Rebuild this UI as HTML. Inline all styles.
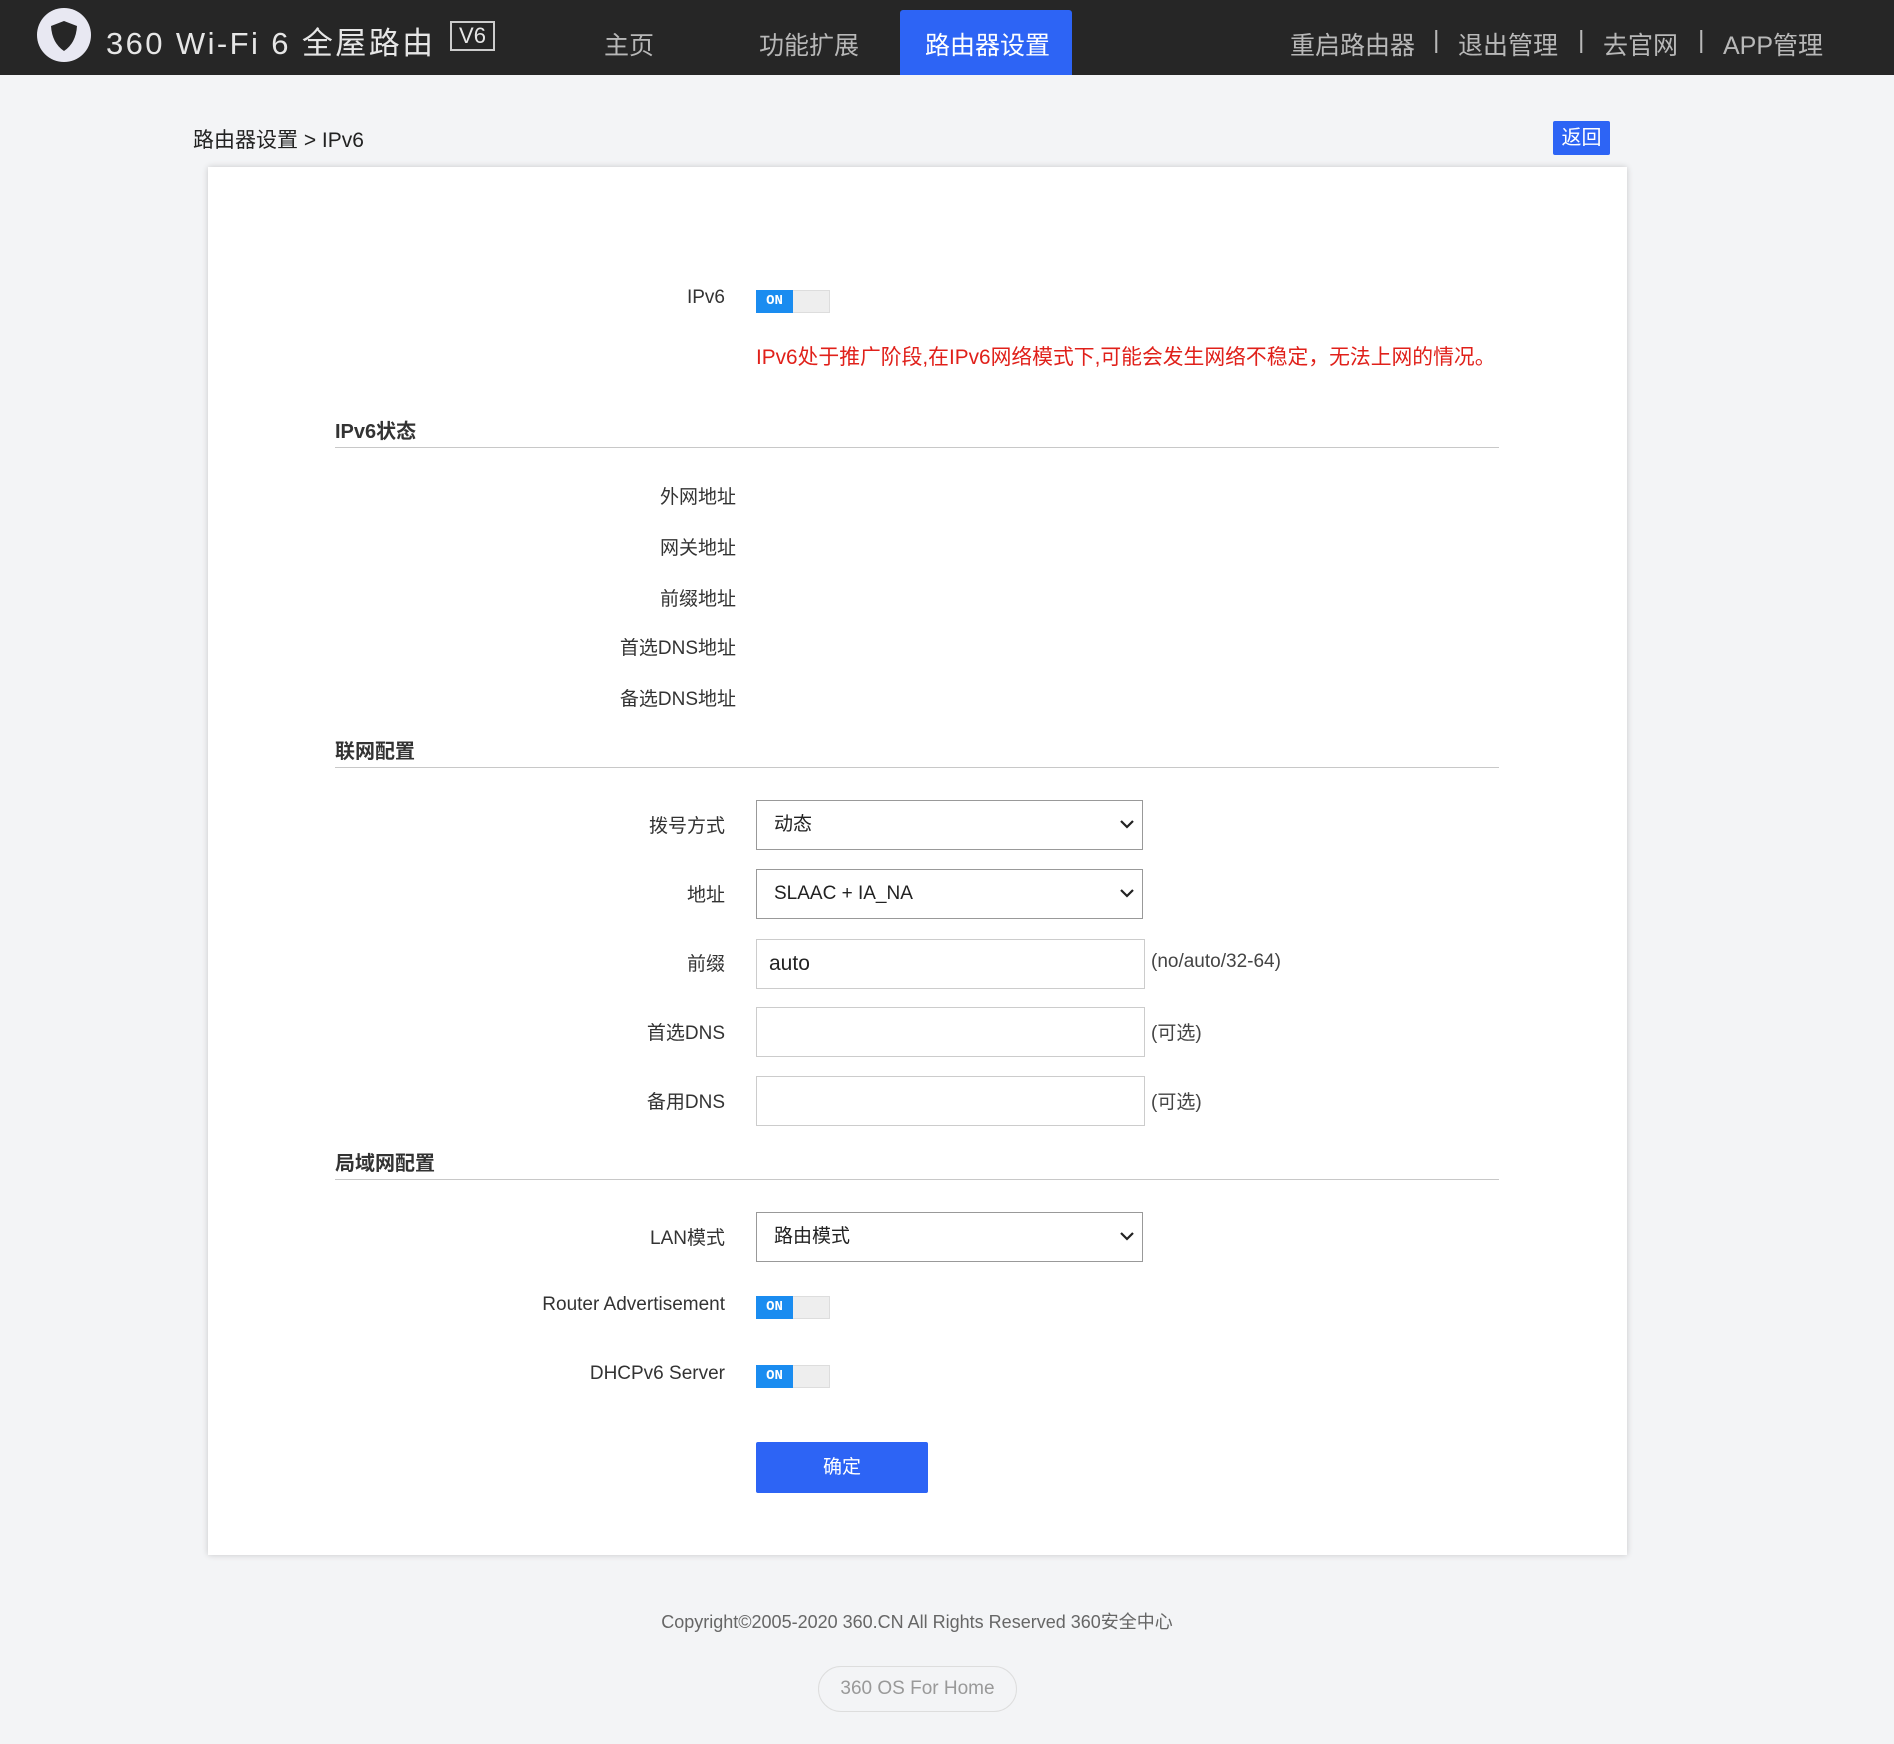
<!DOCTYPE html>
<html><head><meta charset="utf-8"><style>
*{margin:0;padding:0;box-sizing:border-box}
body{width:1894px;height:1744px;background:#f3f4f6;font-family:"Liberation Sans","Noto Sans CJK SC",sans-serif;position:relative;overflow:hidden;color:#333}
.a{position:absolute;white-space:nowrap}
.hdr{position:absolute;left:0;top:0;width:1894px;height:75px;background:#262626}
.nav{color:#b8b8b8;font-size:25px;top:26px}
.card{position:absolute;left:208px;top:167px;width:1419px;height:1388px;background:#fff;box-shadow:0 0 6px rgba(0,0,0,.18)}
.lbl{font-size:19px;color:#333;text-align:right}
.sec{font-size:20px;font-weight:bold;color:#333}
.line{position:absolute;left:335px;width:1164px;height:1px;background:#c8c8c8}
.tg{position:absolute;width:74px;height:23px;border:1px solid #ddd;background:#eee}
.tg b{position:absolute;left:-1px;top:-1px;width:37px;height:23px;background:#1a8cf0;color:#fff;font:bold 14px "Liberation Mono",monospace;text-align:center;line-height:23px}
.sel,.inp{position:absolute;left:756px;width:387px;height:50px;border:1px solid #999;background:#fff;font-size:19px;padding-left:17px;line-height:48px;color:#222}
.inp{border-color:#ccc;width:389px}
.sel svg{position:absolute;right:8px;top:18px}
.hint{font-size:19px;color:#444}
</style></head><body>
<div class="hdr"></div>
<svg class="a" style="left:36px;top:7px" width="56" height="56" viewBox="0 0 56 56"><circle cx="28" cy="28" r="27" fill="#e8e8f2"/><path d="M28 14 L41 19 Q40 36 28 44 Q16 36 15 19 Z" fill="#262626"/></svg>
<div class="a" style="left:106px;top:18px;color:#e6e6e6;font-size:31px;letter-spacing:2.4px">360 Wi-Fi 6 全屋路由</div>
<div class="a" style="left:450px;top:21px;width:45px;height:30px;border:2px solid #ccc;color:#e6e6e6;font-size:22px;text-align:center;line-height:26px">V6</div>
<div class="a nav" style="left:604px">主页</div>
<div class="a nav" style="left:759px">功能扩展</div>
<div class="a" style="left:900px;top:10px;width:172px;height:65px;background:#2d64f5;border-radius:3px 3px 0 0"></div>
<div class="a nav" style="left:925px;color:#fff">路由器设置</div>
<div class="a nav" style="left:1290px">重启路由器</div>
<div class="a nav" style="left:1433px">|</div>
<div class="a nav" style="left:1458px">退出管理</div>
<div class="a nav" style="left:1578px">|</div>
<div class="a nav" style="left:1603px">去官网</div>
<div class="a nav" style="left:1698px">|</div>
<div class="a nav" style="left:1723px">APP管理</div>

<div class="a" style="left:193px;top:124px;font-size:21px;color:#222">路由器设置 &gt; IPv6</div>
<div class="a" style="left:1553px;top:121px;width:57px;height:34px;background:#2d64f5;color:#fff;font-size:20px;text-align:center;line-height:34px;border-radius:2px">返回</div>

<div class="card"></div>
<div class="a lbl" style="right:1169px;top:287px">IPv6</div>
<div class="tg" style="left:756px;top:290px"><b>ON</b></div>
<div class="a" style="left:756px;top:340px;font-size:20.8px;color:#e0201a">IPv6处于推广阶段,在IPv6网络模式下,可能会发生网络不稳定，无法上网的情况。</div>

<div class="a sec" style="left:335px;top:415px">IPv6状态</div>
<div class="line" style="top:447px"></div>
<div class="a lbl" style="right:1158px;top:482px">外网地址</div>
<div class="a lbl" style="right:1158px;top:533px">网关地址</div>
<div class="a lbl" style="right:1158px;top:584px">前缀地址</div>
<div class="a lbl" style="right:1158px;top:633px">首选DNS地址</div>
<div class="a lbl" style="right:1158px;top:684px">备选DNS地址</div>

<div class="a sec" style="left:335px;top:735px">联网配置</div>
<div class="line" style="top:767px"></div>
<div class="a lbl" style="right:1169px;top:811px">拨号方式</div>
<div class="sel" style="top:800px">动态<svg width="14" height="10"><path d="M1 2l6 6 6-6" stroke="#222" stroke-width="2.2" fill="none"/></svg></div>
<div class="a lbl" style="right:1169px;top:880px">地址</div>
<div class="sel" style="top:869px">SLAAC + IA_NA<svg width="14" height="10"><path d="M1 2l6 6 6-6" stroke="#222" stroke-width="2.2" fill="none"/></svg></div>
<div class="a lbl" style="right:1169px;top:949px">前缀</div>
<div class="inp" style="top:939px;font-size:21px;padding-left:12px">auto</div>
<div class="a hint" style="left:1151px;top:951px">(no/auto/32-64)</div>
<div class="a lbl" style="right:1169px;top:1018px">首选DNS</div>
<div class="inp" style="top:1007px"></div>
<div class="a hint" style="left:1151px;top:1018px">(可选)</div>
<div class="a lbl" style="right:1169px;top:1087px">备用DNS</div>
<div class="inp" style="top:1076px"></div>
<div class="a hint" style="left:1151px;top:1087px">(可选)</div>

<div class="a sec" style="left:335px;top:1147px">局域网配置</div>
<div class="line" style="top:1179px"></div>
<div class="a lbl" style="right:1169px;top:1223px">LAN模式</div>
<div class="sel" style="top:1212px">路由模式<svg width="14" height="10"><path d="M1 2l6 6 6-6" stroke="#222" stroke-width="2.2" fill="none"/></svg></div>
<div class="a lbl" style="right:1169px;top:1294px">Router Advertisement</div>
<div class="tg" style="left:756px;top:1296px"><b>ON</b></div>
<div class="a lbl" style="right:1169px;top:1363px">DHCPv6 Server</div>
<div class="tg" style="left:756px;top:1365px"><b>ON</b></div>
<div class="a" style="left:756px;top:1442px;width:172px;height:51px;background:#2d64f5;color:#fff;font-size:19px;text-align:center;line-height:51px;border-radius:2px">确定</div>

<div class="a" style="left:0;width:1834px;top:1608px;text-align:center;font-size:18px;color:#666">Copyright©2005-2020 360.CN All Rights Reserved 360安全中心</div>
<div class="a" style="left:818px;top:1666px;width:199px;height:46px;border:1px solid #ddd;border-radius:23px;text-align:center;line-height:44px;font-size:19px;color:#999">360 OS For Home</div>
</body></html>
